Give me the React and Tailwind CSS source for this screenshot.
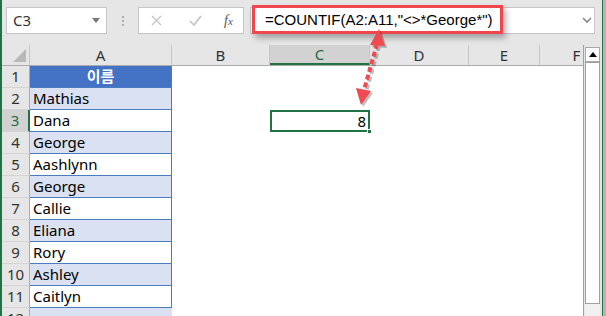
import React from 'react'

const names = ['Mathias', 'Dana', 'George', 'Aashlynn', 'George', 'Callie', 'Eliana', 'Rory', 'Ashley', 'Caitlyn']

const cols = [
  { key: 'B', w: 'w-[98px]' },
  { key: 'C', w: 'w-[100px]' },
  { key: 'D', w: 'w-[99px]' },
  { key: 'E', w: 'w-[71px]' },
]

const font = { fontFamily: '"Noto Sans", "Noto Sans CJK KR", sans-serif' }

const Arrow = () => (
  <svg className="absolute left-[350px] top-[24px]" width="50" height="90" viewBox="0 0 50 90">
    <g transform="translate(2,2)" opacity="0.25">
      <line x1="27" y1="20" x2="14" y2="66" stroke="#000" strokeWidth="4" strokeDasharray="5 3" />
      <polygon points="29,5 20,21 35,22" fill="#000" />
      <polygon points="11,81 6,64 21,67" fill="#000" />
    </g>
    <line x1="27" y1="20" x2="14" y2="66" stroke="#f0494f" strokeWidth="4" strokeDasharray="5 3" />
    <polygon points="29,5 20,21 35,22" fill="#f0494f" />
    <polygon points="11,81 6,64 21,67" fill="#f0494f" />
  </svg>
)

export default function App() {
  return (
    <div className="relative w-[606px] h-[316px] overflow-hidden bg-[#e6e6e6] flex" style={font}>
      <div className="w-[2px] bg-[#217346]" />
      <div className="w-[600px] flex flex-col">
        {/* formula bar */}
        <div className="h-[45px] flex items-start pt-[7px] shrink-0">
          <div className="ml-[4px] w-[101px] h-[27px] bg-white border border-[#c6c6c6] flex items-center justify-between pl-[6px] pr-[6px]">
            <span className="text-[15px] text-[#333]">C3</span>
            <span className="w-0 h-0 border-l-[4px] border-r-[4px] border-t-[5px] border-l-transparent border-r-transparent border-t-[#777]" />
          </div>
          <div className="w-[31px] h-[27px] flex flex-col items-center justify-center gap-[2px]">
            <span className="w-[2px] h-[2px] bg-[#b0b0b0]" />
            <span className="w-[2px] h-[2px] bg-[#b0b0b0]" />
            <span className="w-[2px] h-[2px] bg-[#b0b0b0]" />
          </div>
          <div className="w-[106px] h-[27px] bg-white border border-[#c6c6c6] flex items-center">
            <svg className="ml-[12px]" width="11" height="11" viewBox="0 0 11 11">
              <path d="M1 1 L10 10 M10 1 L1 10" stroke="#c3c3c3" strokeWidth="1.3" />
            </svg>
            <svg className="ml-[27px]" width="13" height="11" viewBox="0 0 13 11">
              <path d="M1 6 L5 10 L12 1" stroke="#c3c3c3" strokeWidth="1.6" fill="none" />
            </svg>
            <span className="ml-[22px] text-[14px] italic text-[#555]" style={{ fontFamily: '"Liberation Serif", serif' }}>
              f<span className="text-[11px]">x</span>
            </span>
          </div>
          <div className="ml-[6px] w-[345px] h-[27px] bg-white border border-[#c6c6c6] flex items-center justify-end pr-[2px]">
            <svg width="10" height="7" viewBox="0 0 10 7">
              <path d="M1 1 L5 5 L9 1" stroke="#888" strokeWidth="1.6" fill="none" />
            </svg>
          </div>
        </div>

        {/* sheet */}
        <div className="flex flex-1">
          <div className="w-[581px] flex flex-col bg-white">
            <div className="flex h-[21px] bg-[#e6e6e6] border-b border-[#ababab] text-[15px] text-[#333] shrink-0">
              <div className="w-[28px] relative border-r border-[#c6c6c6]">
                <span className="absolute right-[3px] bottom-[3px] w-0 h-0 border-b-[13px] border-l-[13px] border-b-[#b8b8b8] border-l-transparent" />
              </div>
              <div className="w-[142px] border-r border-[#c6c6c6] flex items-center justify-center leading-none">A</div>
              {cols.map((c) => (
                <div
                  key={c.key}
                  className={`${c.w} border-r border-[#c6c6c6] flex items-center justify-center leading-none ${c.key === 'C' ? 'bg-[#d2d2d2] text-[#1e6b41] border-b-2 border-b-[#217346]' : ''}`}
                >
                  {c.key}
                </div>
              ))}
              <div className="flex-1 flex items-center justify-center pl-[30px] leading-none">F</div>
            </div>

            <div className="flex flex-col text-[15px]">
              {['이름', ...names, ''].map((n, i) => {
                const r = i + 1
                const isHead = i === 0
                const inTable = i <= 10
                const band = i % 2 === 1
                return (
                  <div key={r} className="flex h-[22px] shrink-0">
                    <div
                      className={`w-[28px] flex items-center justify-center border-b border-[#d4d4d4] leading-none ${r === 3 ? 'bg-[#d2d2d2] text-[#1e6b41] border-r-2 border-r-[#217346]' : 'bg-[#e6e6e6] text-[#333] border-r border-r-[#ababab]'}`}
                    >
                      {r}
                    </div>
                    <div
                      className={`w-[142px] flex items-center leading-none ${inTable ? 'border-b border-r border-[#4a7dbf]' : ''} ${isHead ? 'bg-[#4472c4] text-white font-bold justify-center' : band ? 'bg-[#d9e1f2] text-black pl-[3px]' : 'bg-white text-black pl-[3px]'}`}
                    >
                      {n}
                    </div>
                    <div className="w-[98px]" />
                    <div className="w-[100px] relative">
                      {r === 3 && (
                        <div className="absolute inset-0 border-2 border-[#217346] flex items-center justify-end pr-[2px] leading-none text-black">
                          8
                          <span className="absolute right-[-4px] bottom-[-4px] w-[5px] h-[5px] bg-[#217346] border border-white" />
                        </div>
                      )}
                    </div>
                  </div>
                )
              })}
            </div>
          </div>

          {/* scrollbar */}
          <div className="w-[19px] flex flex-col border-l border-[#a0a0a0] bg-[#e6e6e6]">
            <div className="ml-[1px] mt-[2px] w-[15px] h-[15px] bg-white border border-[#a8a8a8] flex items-center justify-center">
              <span className="w-0 h-0 border-l-[4px] border-r-[4px] border-b-[5px] border-l-transparent border-r-transparent border-b-black" />
            </div>
            <div className="ml-[1px] w-[15px] h-[242px] bg-white border border-[#a0a0a0]" />
            <div className="ml-[1px] w-[15px] flex-1 bg-[#f0f0f0]" />
          </div>
        </div>
      </div>
      <div className="w-[1px] bg-[#217346]" />
      <div className="w-[3px] bg-[#b4b4b4]" />

      {/* annotation */}
      <div
        className="absolute left-[252px] top-[5px] w-[251px] h-[29px] border-[3px] border-[#ee474d] bg-white flex items-center pl-[10px] text-[15px] text-black whitespace-nowrap shadow-[3px_4px_6px_rgba(0,0,0,0.3)] leading-none"
        style={{ fontFamily: '"Liberation Sans", sans-serif' }}
      >
        =COUNTIF(A2:A11,"&lt;&gt;*George*")
      </div>
      <Arrow />
    </div>
  )
}
